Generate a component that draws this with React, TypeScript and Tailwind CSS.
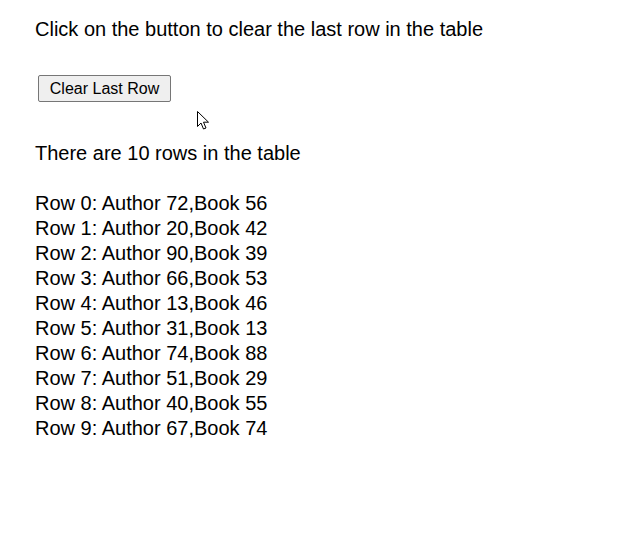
const ROWS = [
  ["72", "56"],
  ["20", "42"],
  ["90", "39"],
  ["66", "53"],
  ["13", "46"],
  ["31", "13"],
  ["74", "88"],
  ["51", "29"],
  ["40", "55"],
  ["67", "74"],
];

function Cursor() {
  return (
    <svg width="13" height="20" viewBox="0 0 13 20" className="absolute left-[197px] top-[111px]">
      <path
        d="M0.5 0.5 L0.5 15.5 L4 12 L6.5 18 L9 17 L6.5 11.2 L11.5 11.2 Z"
        fill="#fff"
        stroke="#000"
        strokeWidth="1"
        strokeLinejoin="miter"
      />
    </svg>
  );
}

export default function App() {
  return (
    <div className="relative w-[637px] h-[541px] bg-white font-['Liberation_Sans',Arial,sans-serif] text-black">
      <div className="pl-[35px] pt-[17px] text-[20px] leading-[25px]">
        <p>Click on the button to clear the last row in the table</p>
        <div className="mt-[33px] ml-[3px]">
          <button className="h-[27px] w-[133px] text-[16px] leading-[19px] bg-[#efefef] border border-[#767676] rounded-[2px] text-black">
            Clear Last Row
          </button>
        </div>
        <p className="mt-[39px]">There are 10 rows in the table</p>
        <div className="mt-[25px]">
          {ROWS.map(([a, b], i) => (
            <div key={i}>
              Row {i}: Author {a},Book {b}
            </div>
          ))}
        </div>
      </div>
      <Cursor />
    </div>
  );
}
